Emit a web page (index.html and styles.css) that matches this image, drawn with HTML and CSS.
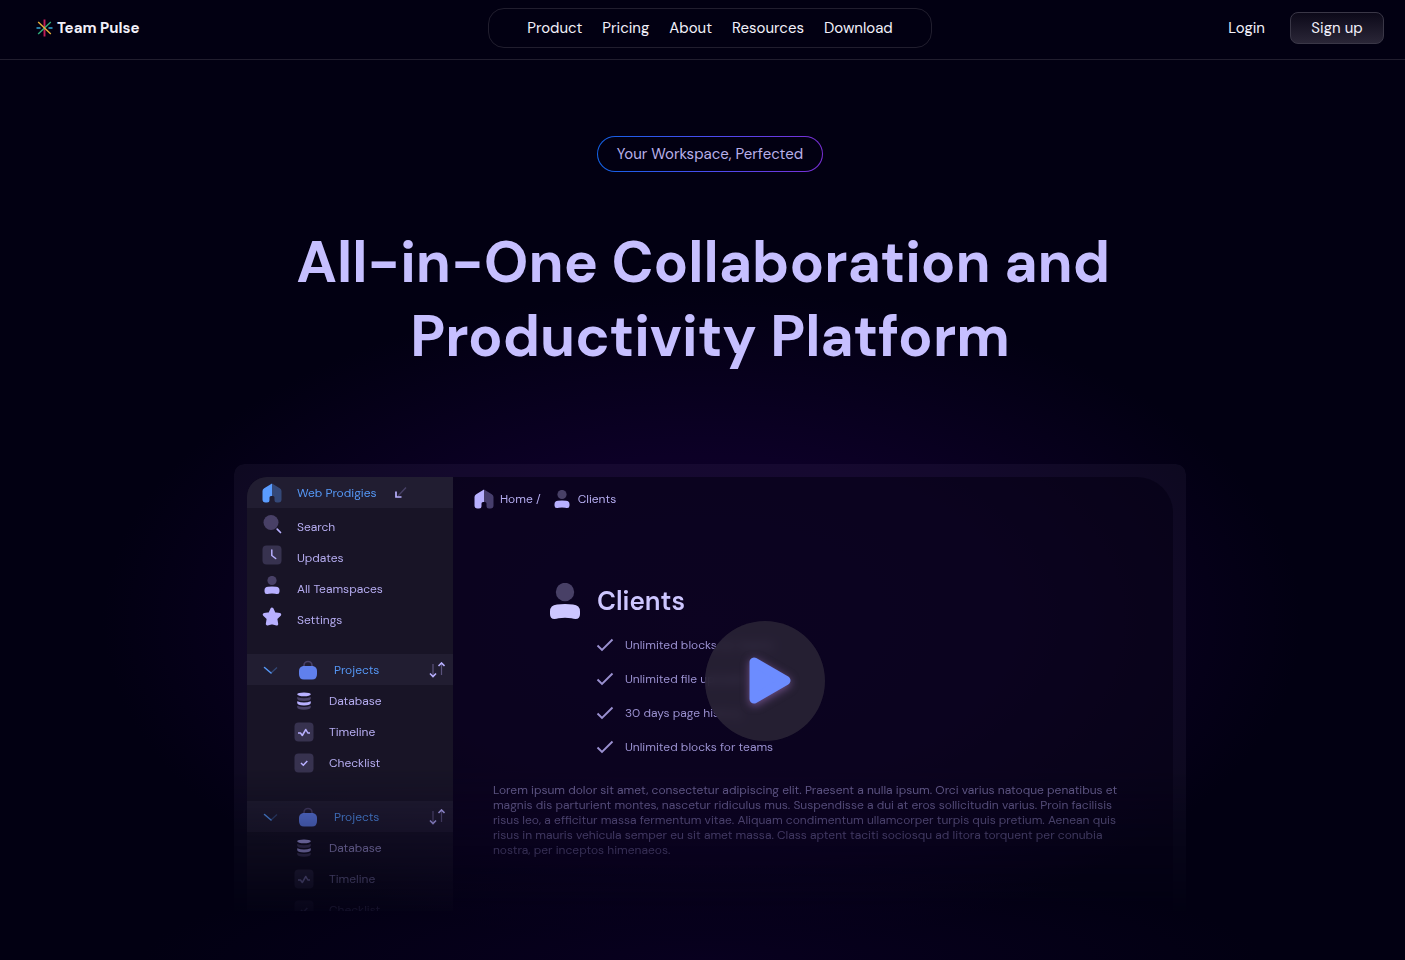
FILE: index.html
```html
<!DOCTYPE html>
<html lang="en">
<head>
<meta charset="utf-8">
<meta name="viewport" content="width=device-width, initial-scale=1">
<title>Team Pulse</title>
<link rel="stylesheet" href="styles.css">
</head>
<body>
<svg class="sprite" aria-hidden="true">
  <defs>
    <symbol id="house" viewBox="0 0 20 20">
      <path d="M10 0.500 2.200 5.200Q.5 6.300.5 8v8.500q0 3 3 3H5q2.500 0 2.500-2.500V14.500q0-1.500 1.500-1.500h1z" fill="currentColor"/>
      <path d="M10 .5 17.800 5.200q1.700 1.100 1.700 2.800v8.500q0 3-3 3H15q-2.500 0-2.500-2.500v-2.500q0-1.500-1.500-1.500h-1z" fill="currentColor" opacity=".35"/>
    </symbol>
    <symbol id="person" viewBox="0 0 30 36">
      <circle cx="15" cy="9" r="9.200" fill="#484066"/>
      <path d="M0 28.500Q0 22 7 21.500q8-1 16 0 7 .5 7 7v2.500q0 5-4.500 5-2 0-4-.7-6.500-1-13 0-2 .7-4 .7Q0 36 0 31z" fill="currentColor"/>
    </symbol>
    <symbol id="search" viewBox="0 0 20 20">
      <circle cx="9" cy="8.500" r="7.500" fill="#484066"/>
      <path d="m15.200 15.200 3.300 3.300" stroke="currentColor" stroke-width="1.700" stroke-linecap="round"/>
    </symbol>
    <symbol id="clock" viewBox="0 0 20 20">
      <rect x=".5" y=".5" width="19" height="19" rx="4" fill="#37324f"/>
      <path d="M9.800 5v5.500l3.900 3" fill="none" stroke="currentColor" stroke-width="1.500" stroke-linecap="round"/>
    </symbol>
    <symbol id="star" viewBox="0 0 20 20">
      <path d="m10 2 2.300 4.800 5.400.8-3.900 3.900.9 5.500-4.700-1.200L5.300 17l.9-5.500-3.900-3.900 5.400-.8z" fill="currentColor" stroke="currentColor" stroke-width="3" stroke-linejoin="round"/>
    </symbol>
    <symbol id="collapse" viewBox="0 0 14 14">
      <path d="M4 10 12 1.500" stroke="#484066" stroke-width="1.300"/>
      <path d="M2 5.500V11h5.500" fill="none" stroke="currentColor" stroke-width="1.700"/>
    </symbol>
    <symbol id="chevron" viewBox="0 0 16 10">
      <path d="m9 8 6-5.500" stroke="currentColor" stroke-width="1.200" opacity=".35"/>
      <path d="M2.500 2.500 9 8" stroke="currentColor" stroke-width="1.500" stroke-linecap="round"/>
    </symbol>
    <symbol id="bag" viewBox="0 0 20 20">
      <path d="M6 8V5.500a4 4 0 0 1 8 0V8" fill="none" stroke="#484066" stroke-width="1.600"/>
      <path d="M5 6h10q4 1 4 5v3q0 5.500-5 5.500H6q-5 0-5-5.500v-3q0-4 4-5z" fill="#6080ec"/>
    </symbol>
    <symbol id="sort" viewBox="0 0 16 16">
      <path d="M4 2v12M12.500 2v11" stroke="#5a527c" stroke-width="1.200"/>
      <path d="m1 11.500 3 3 3-3M9.500 4l3-3 3 3" fill="none" stroke="currentColor" stroke-width="1.600"/>
    </symbol>
    <symbol id="database" viewBox="0 0 20 20">
      <ellipse cx="10" cy="3.300" rx="6.800" ry="1.900" fill="currentColor"/>
      <path d="M3.200 6q6.800 2.600 13.600 0v1.500q0 2.500-6.800 2.500T3.200 7.500zM3.200 14.800q6.800 2.600 13.600 0v1.200q0 2.700-6.800 2.700T3.200 16z" fill="#484066"/>
      <path d="M3.200 10.300q6.800 2.600 13.600 0v1.500q0 2.700-6.800 2.700T3.200 11.800z" fill="currentColor"/>
    </symbol>
    <symbol id="pulse" viewBox="0 0 20 20">
      <rect x=".5" y=".5" width="19" height="19" rx="4" fill="#37324f"/>
      <path d="M4 11h2.500L8.300 13.500l3.500-6 2 3.500H16" fill="none" stroke="currentColor" stroke-width="1.500" stroke-linejoin="round"/>
    </symbol>
    <symbol id="checkbox" viewBox="0 0 20 20">
      <rect x=".5" y=".5" width="19" height="19" rx="4" fill="#37324f"/>
      <path d="m7 10 2.300 2.200 4-4.200" fill="none" stroke="currentColor" stroke-width="1.500"/>
    </symbol>
    <symbol id="check" viewBox="0 0 18 14">
      <path d="m1.500 7.500 4.500 4.500L16.500 1.500" fill="none" stroke="currentColor" stroke-width="1.900"/>
    </symbol>
  </defs>
</svg>

<header class="topbar">
  <a class="brand" href="#">
    <svg class="brand-mark" viewBox="0 0 16 18" aria-hidden="true">
      <path d="M0 9h4M12 9h4" stroke="#35a9d8" stroke-width="1.300"/>
      <path d="M8 .5v17" stroke="#c01d58" stroke-width="1.900"/>
      <path d="M1.700 15 14.300 3" stroke="#2fae7c" stroke-width="1.400"/>
      <path d="m1.700 3 12.600 12" stroke="#eab03a" stroke-width="1.400"/>
    </svg>
    <span>Team Pulse</span>
  </a>
  <nav class="menu" aria-label="Main">
    <a href="#">Product</a>
    <a href="#">Pricing</a>
    <a href="#">About</a>
    <a href="#">Resources</a>
    <a href="#">Download</a>
  </nav>
  <div class="account">
    <a href="#">Login</a>
    <button class="signup" type="button">Sign up</button>
  </div>
</header>

<main class="hero">
  <p class="badge">Your Workspace, Perfected</p>
  <h1>All-in-One Collaboration and&nbsp;<br>Productivity Platform</h1>

  <div class="preview">
    <div class="frame">
      <div class="app">
        <aside class="sidebar">
          <a class="row workspace" href="#"><svg class="icon"><use href="#house"/></svg><span>Web Prodigies</span><svg class="collapse"><use href="#collapse"/></svg></a>
          <nav class="links" aria-label="Workspace">
            <a class="row" href="#"><svg class="icon"><use href="#search"/></svg><span>Search</span></a>
            <a class="row" href="#"><svg class="icon"><use href="#clock"/></svg><span>Updates</span></a>
            <a class="row" href="#"><svg class="icon person"><use href="#person"/></svg><span>All Teamspaces</span></a>
            <a class="row" href="#"><svg class="icon"><use href="#star"/></svg><span>Settings</span></a>
          </nav>
          <section class="group">
            <button class="row group-head" type="button"><svg class="chevron"><use href="#chevron"/></svg><svg class="icon"><use href="#bag"/></svg><span>Projects</span><svg class="sort"><use href="#sort"/></svg></button>
            <a class="row sub" href="#"><svg class="icon"><use href="#database"/></svg><span>Database</span></a>
            <a class="row sub" href="#"><svg class="icon"><use href="#pulse"/></svg><span>Timeline</span></a>
            <a class="row sub" href="#"><svg class="icon"><use href="#checkbox"/></svg><span>Checklist</span></a>
          </section>
          <section class="group">
            <button class="row group-head" type="button"><svg class="chevron"><use href="#chevron"/></svg><svg class="icon"><use href="#bag"/></svg><span>Projects</span><svg class="sort"><use href="#sort"/></svg></button>
            <a class="row sub" href="#"><svg class="icon"><use href="#database"/></svg><span>Database</span></a>
            <a class="row sub" href="#"><svg class="icon"><use href="#pulse"/></svg><span>Timeline</span></a>
            <a class="row sub" href="#"><svg class="icon"><use href="#checkbox"/></svg><span>Checklist</span></a>
          </section>
        </aside>

        <article class="page">
          <nav class="crumbs" aria-label="Breadcrumb">
            <svg class="icon"><use href="#house"/></svg><a href="#">Home /</a>
            <svg class="icon person"><use href="#person"/></svg><a href="#">Clients</a>
          </nav>
          <div class="title">
            <svg class="avatar"><use href="#person"/></svg>
            <h2>Clients</h2>
          </div>
          <ul class="features">
            <li><svg><use href="#check"/></svg>Unlimited blocks for teams</li>
            <li><svg><use href="#check"/></svg>Unlimited file uploads</li>
            <li><svg><use href="#check"/></svg>30 days page history</li>
            <li><svg><use href="#check"/></svg>Unlimited blocks for teams</li>
          </ul>
          <p class="body-text">Lorem ipsum dolor sit amet, consectetur adipiscing elit. Praesent a nulla ipsum. Orci varius natoque penatibus et magnis dis parturient montes, nascetur ridiculus mus. Suspendisse a dui at eros sollicitudin varius. Proin facilisis risus leo, a efficitur massa fermentum vitae. Aliquam condimentum ullamcorper turpis quis pretium. Aenean quis risus in mauris vehicula semper eu sit amet massa. Class aptent taciti sociosqu ad litora torquent per conubia nostra, per inceptos himenaeos.</p>
        </article>
      </div>
    </div>

    <button class="play" type="button" aria-label="Play video">
      <svg viewBox="0 0 42 48" aria-hidden="true"><path d="M5 5v37L37 23.500z" fill="#6c8cff" stroke="#6c8cff" stroke-width="9" stroke-linejoin="round"/></svg>
    </button>
  </div>
</main>
</body>
</html>
```
FILE: styles.css
```css
* {
  box-sizing: border-box;
}

body {
  margin: 0;
  min-height: 100vh;
  background: #020012;
  color: #f2f0fa;
  font-family: "DM Sans", Inter, "Liberation Sans", sans-serif;
  font-size: 15px;
}

a {
  color: inherit;
  text-decoration: none;
}

button {
  border: 0;
  background: none;
  color: inherit;
  font: inherit;
  cursor: pointer;
}

h1,
h2,
p,
ul {
  margin: 0;
  padding: 0;
}

.sprite {
  position: absolute;
  width: 0;
  height: 0;
}

/* Header */

.topbar {
  display: grid;
  grid-template-columns: 1fr auto 1fr;
  align-items: center;
  height: 60px;
  padding: 0 21px 4px 36px;
  border-bottom: 1px solid #211e2e;
}

.brand {
  display: flex;
  align-items: center;
  gap: 4px;
  font-size: 15px;
  font-weight: 700;
}

.brand-mark {
  width: 17px;
  height: 18px;
}

.menu {
  display: flex;
  gap: 20px;
  padding: 10px 38px;
  border: 1px solid #211e2e;
  border-radius: 16px;
  line-height: 18px;
}

.account {
  display: flex;
  align-items: center;
  justify-content: flex-end;
  gap: 25px;
}

.signup {
  width: 94px;
  height: 32px;
  padding: 0;
  border: 1px solid #3a3747;
  border-radius: 8px;
  background: linear-gradient(#0c0919, #2a2637);
}

/* Hero */

.hero {
  display: flex;
  flex-direction: column;
  align-items: center;
  min-height: 900px;
  padding: 76px 0 49px 15px;
  background:
    radial-gradient(ellipse 560px 100px at 50% 100%, #08001f, #08001f00),
    radial-gradient(ellipse 600px 330px at 50% 560px, #0e002b 0%, #0c0026 50%, #0c002600 100%);
}

.badge {
  padding: 8px 19px;
  border: 1px solid transparent;
  border-radius: 18px;
  background:
    linear-gradient(#020012, #020012) padding-box,
    linear-gradient(90deg, #1262e6, #4a4cf0 50%, #7a2fd6) border-box;
  color: #b9b0ea;
  line-height: 18px;
}

h1 {
  margin-top: 54px;
  color: #c6bfff;
  font-size: 57px;
  font-weight: 700;
  line-height: 74px;
  text-align: center;
}

/* Product preview */

.preview {
  position: relative;
  width: 68.500%;
  max-width: 1100px;
  margin-top: 90px;
}

.frame {
  height: 447px;
  padding: 13px 13px 0;
  overflow: hidden;
  border-radius: 10px 10px 0 0;
  background: #b496dc0f;
  -webkit-mask-image: linear-gradient(#000 68%, #0000 103%);
  mask-image: linear-gradient(#000 68%, #0000 103%);
}

.app {
  display: flex;
  height: 100%;
  overflow: hidden;
  border-radius: 20px 36px 0 0;
  background: #05001499;
  color: #b5acf0;
  font-size: 12px;
}

.sidebar {
  flex: 0 0 206px;
  background: #181426;
}

.row {
  display: flex;
  align-items: center;
  gap: 15px;
  width: 100%;
  height: 31px;
  padding: 0 8px 0 15px;
  text-align: left;
}

.icon {
  flex: none;
  width: 20px;
  height: 20px;
  color: #b8b0ff;
}

.workspace {
  background: #211d31;
  color: #5597f5;
}

.workspace .icon {
  color: #5a9cff;
}

.workspace .collapse {
  width: 14px;
  height: 14px;
  margin-left: 2px;
  color: #b8b0ff;
}

.links {
  padding-top: 3px;
}

.links .icon {
  align-self: flex-start;
  margin-top: 3px;
}

.icon.person {
  height: 18px;
}

.group {
  margin-top: 23px;
}

.links + .group {
  margin-top: 19px;
}

.group-head {
  gap: 16px;
  background: #211d31;
  color: #5597f5;
}

.chevron {
  width: 16px;
  height: 10px;
}

.group-head .icon {
  margin-left: 4px;
}

.sort {
  width: 16px;
  height: 16px;
  margin-left: auto;
  color: #b8b0ff;
}

.sub {
  padding-left: 47px;
}

.page {
  flex: 1;
  min-width: 0;
  padding: 12px 40px 0;
}

.crumbs {
  display: flex;
  align-items: center;
  gap: 6px;
  margin-left: -19px;
}

.crumbs .person {
  margin-left: 5px;
}

.title {
  display: flex;
  align-items: center;
  gap: 17px;
  margin: 74px 0 0 57px;
  color: #cdc6ff;
}

.avatar {
  width: 30px;
  height: 36px;
}

h2 {
  font-size: 26px;
  font-weight: 600;
  line-height: 30px;
}

.features {
  margin: 9px 0 0 103px;
  list-style: none;
  color: #9a90d0;
}

.features li {
  display: flex;
  align-items: center;
  gap: 11px;
  height: 34px;
}

.features svg {
  width: 18px;
  height: 14px;
}

.body-text {
  max-width: 640px;
  margin-top: 19px;
  color: #6a6192;
  font-size: 12px;
  font-weight: 450;
  line-height: 15px;
}

.play {
  position: absolute;
  top: 157px;
  left: 50%;
  display: grid;
  place-items: center;
  width: 120px;
  height: 120px;
  margin-left: -5px;
  padding: 0 0 0 10px;
  border-radius: 50%;
  background: #2a2536d9;
  -webkit-backdrop-filter: blur(5px);
  backdrop-filter: blur(5px);
}

.play svg {
  width: 42px;
  height: 48px;
  overflow: visible;
  filter: drop-shadow(0 2px 4px #a070c0a0);
}
```
